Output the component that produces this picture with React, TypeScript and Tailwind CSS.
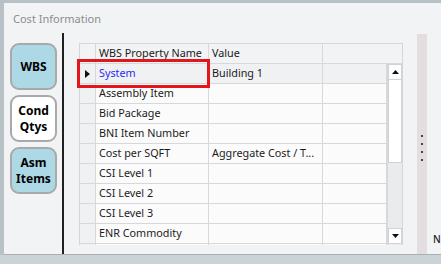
import { ReactNode } from 'react'

const rows = [
  { name: 'System', value: 'Building 1', selected: true },
  { name: 'Assembly Item', value: '' },
  { name: 'Bid Package', value: '' },
  { name: 'BNI Item Number', value: '' },
  { name: 'Cost per SQFT', value: 'Aggregate Cost / T...' },
  { name: 'CSI Level 1', value: '' },
  { name: 'CSI Level 2', value: '' },
  { name: 'CSI Level 3', value: '' },
  { name: 'ENR Commodity', value: '' },
  { name: '', value: '' },
]

const SideButton = ({ active, children }: { active?: boolean; children: ReactNode }) => (
  <button
    className={
      'w-[47px] h-[47px] rounded-[9px] border-2 border-[#a9a9a9] flex items-center justify-center text-center text-[12px] font-bold leading-[16px] text-black ' +
      (active ? 'bg-[#add8e6]' : 'bg-white')
    }
  >
    {children}
  </button>
)

const Cell = ({ w, className, children }: { w: string; className?: string; children?: ReactNode }) => (
  <div className={`${w} h-full shrink-0 border-r border-[#d6d9dc] px-[3px] flex items-center overflow-hidden whitespace-nowrap ${className ?? ''}`}>
    {children}
  </div>
)

export default function App() {
  return (
    <div className="w-[441px] h-[264px] overflow-hidden bg-[#b8c1c6] pl-[4px] pt-[3px] flex flex-col font-['Noto_Sans',sans-serif] text-[10.8px] text-[#1b1b1b]">
      <div className="h-[252px] bg-[#f2f3f5] flex flex-col border-b-[1px] border-[#a8b0b5]">
        <div className="h-[30px] shrink-0 pl-[9px] pt-[9px] text-[11px] leading-[14px] text-[#8a8d90]">Cost Information</div>
        <div className="flex flex-1 min-h-0">
          {/* left tabs */}
          <div className="w-[58px] shrink-0 flex flex-col gap-[5px] pl-[6px] pt-[10px]">
            <SideButton active>WBS</SideButton>
            <SideButton>
              Cond
              <br />
              Qtys
            </SideButton>
            <SideButton active>
              Asm
              <br />
              Items
            </SideButton>
          </div>
          <div className="w-[2px] shrink-0 bg-[#202020]" />

          {/* grid */}
          <div className="w-[353px] shrink-0 pl-[15px] pt-[10px]">
            <div className="relative w-[324px] h-[202px] border border-[#d3d6da] bg-[#f4f5f6]">
              <div className="flex h-[20px] border-b border-[#d6d9dc] bg-[#f2f3f5]">
                <Cell w="w-[16px]" />
                <Cell w="w-[113px]">WBS Property Name</Cell>
                <Cell w="w-[114px]">Value</Cell>
                <div className="flex-1" />
              </div>
              <div className="flex h-[181px] overflow-hidden">
                <div className="w-[307px] shrink-0">
                  {rows.map((r, i) => (
                    <div
                      key={i}
                      className={`flex h-[20px] border-b border-[#d6d9dc] ${r.selected ? 'bg-[#f0f1f3]' : 'bg-[#fbfbfb]'}`}
                    >
                      <Cell w="w-[16px]" className="bg-[#f0f1f3] justify-center !px-0">
                        {r.selected && (
                          <svg width="5" height="8" viewBox="0 0 5 8">
                            <path d="M0 0 L5 4 L0 8 Z" fill="#111" />
                          </svg>
                        )}
                      </Cell>
                      <Cell w="w-[113px]" className={r.selected ? 'text-[#2b2bf0]' : ''}>
                        {r.name}
                      </Cell>
                      <Cell w="w-[114px]">{r.value}</Cell>
                      <Cell w="w-[64px]" />
                    </div>
                  ))}
                </div>
                {/* scrollbar */}
                <div className="w-[15px] shrink-0 flex flex-col bg-[#e9ebed] border-l border-[#d6d9dc]">
                  <div className="h-[16px] bg-white border border-[#cfd3d7] flex items-center justify-center">
                    <svg width="7" height="4" viewBox="0 0 7 4">
                      <path d="M0 4 L3.5 0 L7 4 Z" fill="#111" />
                    </svg>
                  </div>
                  <div className="h-[83px] bg-white border border-[#cfd3d7] border-t-0" />
                  <div className="flex-1" />
                  <div className="h-[16px] mb-[1px] bg-white border border-[#cfd3d7] flex items-center justify-center">
                    <svg width="7" height="4" viewBox="0 0 7 4">
                      <path d="M0 0 L7 0 L3.5 4 Z" fill="#111" />
                    </svg>
                  </div>
                </div>
              </div>
              {/* highlight */}
              <div className="absolute left-[-3px] top-[15px] w-[133px] h-[29px] border-[3px] border-[#e3161c]" />
            </div>
          </div>

          {/* splitter */}
          <div className="w-[10px] shrink-0 mt-[1px] bg-[#e2dedf] flex flex-col items-center gap-[6px] pt-[101px]">
            <span className="w-[2px] h-[2px] rounded-full bg-[#111]" />
            <span className="w-[2px] h-[2px] rounded-full bg-[#111]" />
            <span className="w-[2px] h-[2px] rounded-full bg-[#111]" />
            <span className="w-[2px] h-[2px] rounded-full bg-[#111]" />
          </div>

          <div className="flex-1 min-w-0 flex flex-col justify-end pl-[6px] pb-[8px]">
            <span className="leading-[14px] text-[10px] font-medium">N</span>
          </div>
        </div>
      </div>
      <div className="flex-1 bg-[#ccd3d7] -ml-[4px]" />
    </div>
  )
}
